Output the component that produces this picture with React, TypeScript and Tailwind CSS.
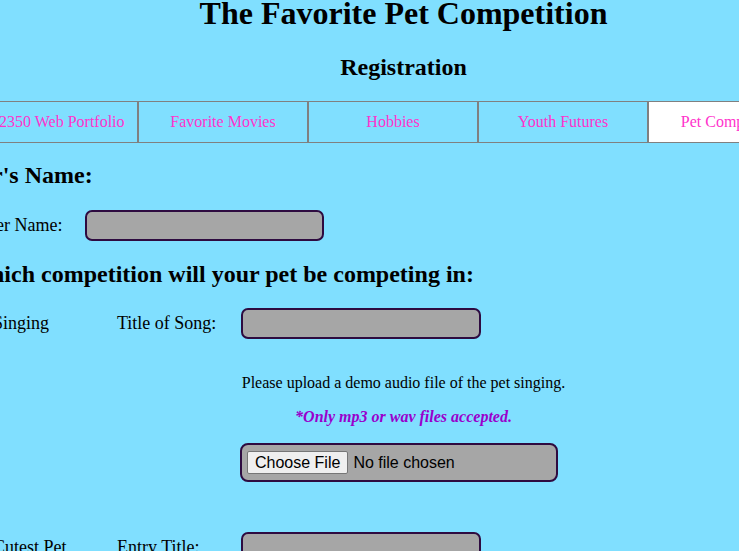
import React from "react";

const navItems = [
  { label: "ITEC 2350 Web Portfolio", active: false, extra: "pr-[22px]" },
  { label: "Favorite Movies", active: false, extra: "" },
  { label: "Hobbies", active: false, extra: "" },
  { label: "Youth Futures", active: false, extra: "" },
  { label: "Pet Competition", active: true, extra: "" },
];

function TextBox({ w }: { w: string }) {
  return (
    <div
      className={`${w} h-[31px] shrink-0 rounded-[7px] border-2 border-[#2e0b40] bg-[#a6a6a6]`}
    />
  );
}

export default function App() {
  return (
    <div className="w-[739px] h-[551px] overflow-hidden bg-[#80dfff] font-['Liberation_Serif',serif] text-black">
      <h1 className="w-[807px] mt-[-5px] text-center text-[32px] leading-[37px] font-bold whitespace-nowrap">
        The Favorite Pet Competition
      </h1>
      <h2 className="w-[807px] mt-[21px] text-center text-[24px] leading-[28px] font-bold">
        Registration
      </h2>

      <nav className="mt-[20px] ml-[-32px] flex w-max">
        {navItems.map((item) => (
          <a
            key={item.label}
            className={`flex h-[42px] w-[170px] shrink-0 items-center justify-center border border-[#808080] text-[16px] leading-[18px] text-[#ff33cc] whitespace-nowrap ${item.extra} ${
              item.active ? "bg-white" : ""
            }`}
          >
            {item.label}
          </a>
        ))}
      </nav>

      <h2 className="mt-[18px] ml-[-68px] text-[24px] leading-[28px] font-bold whitespace-nowrap">
        Owner's Name:
      </h2>

      <div className="mt-[21px] flex h-[31px] items-center">
        <span className="ml-[-39px] w-[124px] shrink-0 text-[18px] leading-[21px] whitespace-nowrap">
          Owner Name:
        </span>
        <TextBox w="w-[239px]" />
      </div>

      <h2 className="mt-[19px] ml-[-33px] text-[24px] leading-[28px] font-bold whitespace-nowrap">
        Which competition will your pet be competing in:
      </h2>

      <div className="mt-[20px] flex h-[31px] items-center">
        <span className="ml-[-7px] w-[124px] shrink-0 text-[18px] leading-[21px] whitespace-nowrap">
          Singing
        </span>
        <span className="w-[124px] shrink-0 text-[18px] leading-[21px] whitespace-nowrap">
          Title of Song:
        </span>
        <TextBox w="w-[240px]" />
      </div>

      <p className="mt-[35px] w-[807px] text-center text-[16px] leading-[18px]">
        Please upload a demo audio file of the pet singing.
      </p>
      <p className="mt-[16px] w-[807px] text-center text-[16px] leading-[18px] font-bold italic text-[#9900cc]">
        *Only mp3 or wav files accepted.
      </p>

      <div className="mt-[17px] ml-[240px] flex h-[39px] w-[318px] items-center gap-[5px] rounded-[8px] border-2 border-[#2e0b40] bg-[#a6a6a6] pl-[5px] font-['Liberation_Sans',sans-serif] text-[16px] text-black">
        <span className="flex h-[23px] items-center rounded-[2px] border border-[#767676] bg-[#efefef] px-[7px]">
          Choose File
        </span>
        <span>No file chosen</span>
      </div>

      <div className="mt-[50px] flex h-[31px] items-center">
        <span className="ml-[-7px] w-[124px] shrink-0 text-[18px] leading-[21px] whitespace-nowrap">
          Cutest Pet
        </span>
        <span className="w-[124px] shrink-0 text-[18px] leading-[21px] whitespace-nowrap">
          Entry Title:
        </span>
        <TextBox w="w-[240px]" />
      </div>
    </div>
  );
}
